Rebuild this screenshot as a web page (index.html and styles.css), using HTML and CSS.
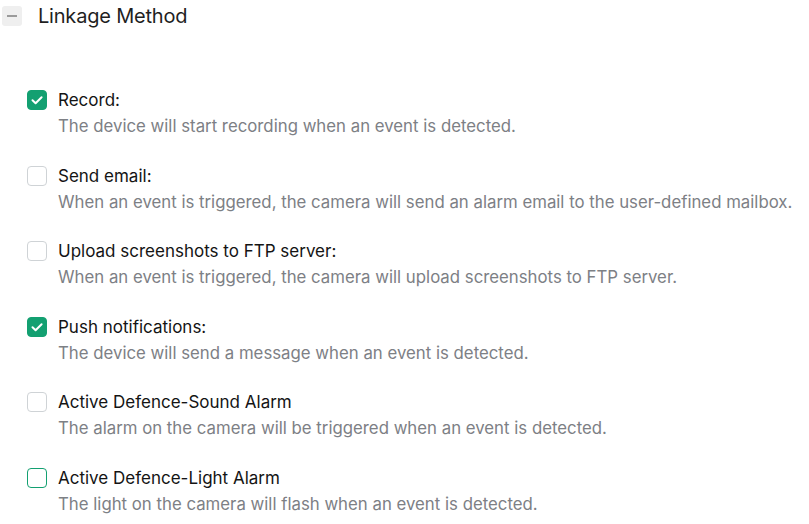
FILE: index.html
```html
<!DOCTYPE html>
<html>
<head>
<meta charset="utf-8">
<link rel="stylesheet" href="styles.css">
</head>
<body>
<div class="panel">
  <div class="header">
    <span class="collapse"><span class="bar"></span></span>
    <span class="header-title">Linkage Method</span>
  </div>
  <div class="list">
    <div class="item">
      <span class="cb checked"><svg viewBox="0 0 20 20" width="20" height="20"><path d="M5.5 10.2 L8.6 13.2 L14.6 7.2" fill="none" stroke="#fff" stroke-width="2" stroke-linecap="round" stroke-linejoin="round"/></svg></span>
      <div class="text">
        <div class="title">Record:</div>
        <div class="desc">The device will start recording when an event is detected.</div>
      </div>
    </div>
    <div class="item">
      <span class="cb"></span>
      <div class="text">
        <div class="title">Send email:</div>
        <div class="desc">When an event is triggered, the camera will send an alarm email to the user-defined mailbox.</div>
      </div>
    </div>
    <div class="item">
      <span class="cb"></span>
      <div class="text">
        <div class="title">Upload screenshots to FTP server:</div>
        <div class="desc">When an event is triggered, the camera will upload screenshots to FTP server.</div>
      </div>
    </div>
    <div class="item">
      <span class="cb checked"><svg viewBox="0 0 20 20" width="20" height="20"><path d="M5.5 10.2 L8.6 13.2 L14.6 7.2" fill="none" stroke="#fff" stroke-width="2" stroke-linecap="round" stroke-linejoin="round"/></svg></span>
      <div class="text">
        <div class="title">Push notifications:</div>
        <div class="desc">The device will send a message when an event is detected.</div>
      </div>
    </div>
    <div class="item">
      <span class="cb"></span>
      <div class="text">
        <div class="title">Active Defence-Sound Alarm</div>
        <div class="desc">The alarm on the camera will be triggered when an event is detected.</div>
      </div>
    </div>
    <div class="item">
      <span class="cb focus"></span>
      <div class="text">
        <div class="title">Active Defence-Light Alarm</div>
        <div class="desc">The light on the camera will flash when an event is detected.</div>
      </div>
    </div>
  </div>
</div>
</body>
</html>
```
FILE: styles.css
```css
html, body {
  margin: 0;
  padding: 0;
  background: #fff;
}
body {
  font-family: "Inter", "Noto Sans", sans-serif;
  color: #222;
}
.panel {
  padding: 6px 0 0 2px;
}
.header {
  display: flex;
  align-items: center;
  height: 20px;
}
.collapse {
  width: 20px;
  height: 20px;
  border-radius: 3px;
  background: #efefef;
  display: flex;
  align-items: center;
  justify-content: center;
}
.bar {
  width: 10px;
  height: 2px;
  background: #9a9a9a;
}
.header-title {
  margin-left: 16px;
  font-size: 20px;
  color: #1f1f1f;
  letter-spacing: -0.2px;
}
.list {
  padding: 64px 0 0 25px;
  display: flex;
  flex-direction: column;
  gap: 27.5px;
}
.item {
  display: flex;
  align-items: flex-start;
}
.cb {
  width: 20px;
  height: 20px;
  box-sizing: border-box;
  border: 1px solid #cfd3d6;
  border-radius: 4px;
  flex: none;
  display: flex;
}
.cb.checked {
  background: #13a071;
  border-color: #13a071;
}
.cb.checked svg {
  display: block;
  margin: -1px;
}
.cb.focus {
  border-color: #13a071;
}
.text {
  margin-left: 11px;
  margin-top: -2px;
}
.title {
  font-size: 17px;
  line-height: 24px;
  color: #141414;
}
.desc {
  font-size: 16.8px;
  line-height: 24px;
  margin-top: 2px;
  color: #7d8085;
}
```
